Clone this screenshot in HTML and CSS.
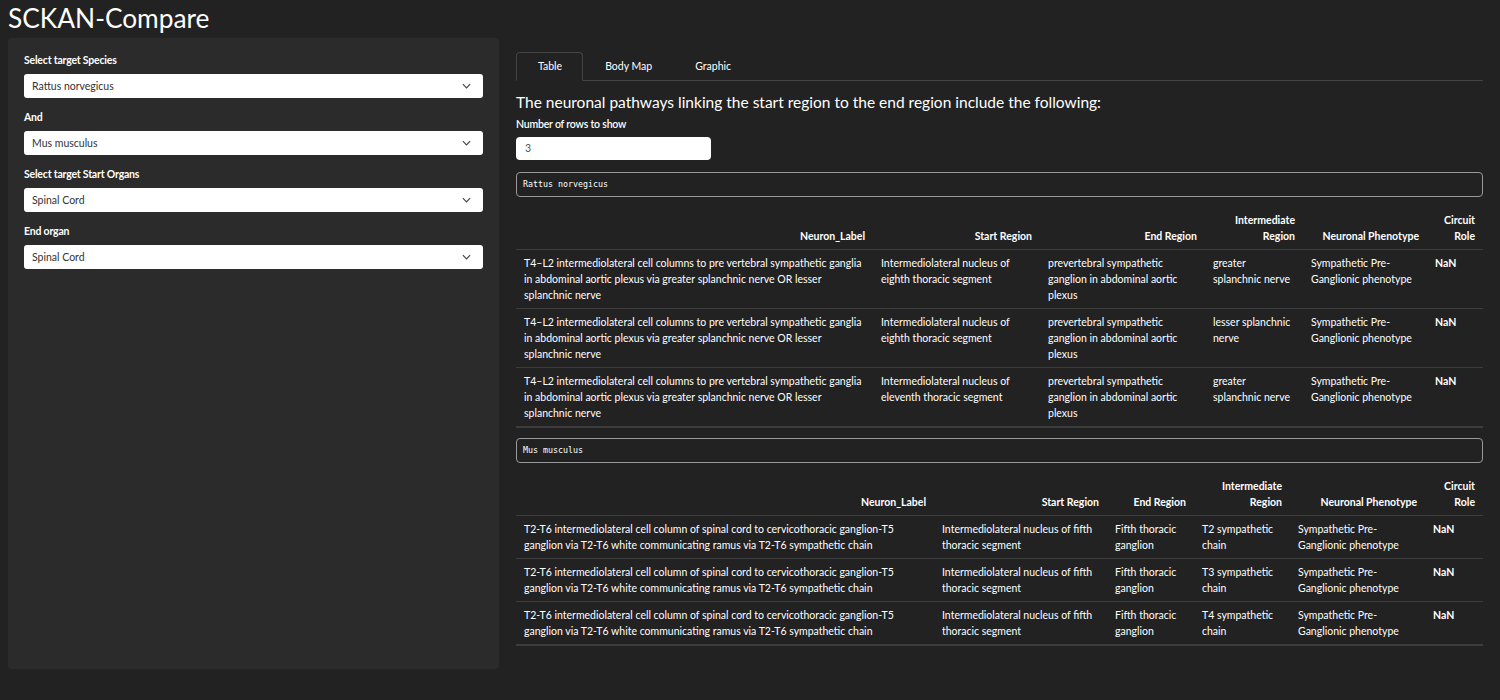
FILE: index.html
```html
<!DOCTYPE html>
<html>
<head>
<meta charset="utf-8">
<link rel="stylesheet" href="styles.css">
</head>
<body>
<div class="page">
  <h1 class="title">SCKAN-Compare</h1>
  <div class="layout">
    <aside class="sidebar">
      <div class="field">
        <label class="lbl">Select target Species</label>
        <div class="select"><span>Rattus norvegicus</span><svg class="chev" viewBox="0 0 10 6" width="9" height="6"><path d="M1 1 L5 5 L9 1" fill="none" stroke="#444" stroke-width="1.3"/></svg></div>
      </div>
      <div class="field">
        <label class="lbl">And</label>
        <div class="select"><span>Mus musculus</span><svg class="chev" viewBox="0 0 10 6" width="9" height="6"><path d="M1 1 L5 5 L9 1" fill="none" stroke="#444" stroke-width="1.3"/></svg></div>
      </div>
      <div class="field">
        <label class="lbl">Select target Start Organs</label>
        <div class="select"><span>Spinal Cord</span><svg class="chev" viewBox="0 0 10 6" width="9" height="6"><path d="M1 1 L5 5 L9 1" fill="none" stroke="#444" stroke-width="1.3"/></svg></div>
      </div>
      <div class="field">
        <label class="lbl">End organ</label>
        <div class="select"><span>Spinal Cord</span><svg class="chev" viewBox="0 0 10 6" width="9" height="6"><path d="M1 1 L5 5 L9 1" fill="none" stroke="#444" stroke-width="1.3"/></svg></div>
      </div>
    </aside>
    <main class="main">
      <ul class="tabs">
        <li class="tab active">Table</li>
        <li class="tab">Body Map</li>
        <li class="tab">Graphic</li>
      </ul>
      <h3 class="heading">The neuronal pathways linking the start region to the end region include the following:</h3>
      <label class="lbl small">Number of rows to show</label>
      <div class="numinput">3</div>

      <pre class="verb">Rattus norvegicus</pre>
      <table class="dt t1">
        <colgroup><col class="c1"><col class="c2"><col class="c3"><col class="c4"><col class="c5"><col class="c6"></colgroup>
        <thead>
          <tr><th>Neuron_Label</th><th>Start Region</th><th>End Region</th><th>Intermediate<br>Region</th><th>Neuronal Phenotype</th><th>Circuit<br>Role</th></tr>
        </thead>
        <tbody>
          <tr><td>T4–L2 intermediolateral cell columns to pre vertebral sympathetic ganglia in abdominal aortic plexus via greater splanchnic nerve OR lesser splanchnic nerve</td><td>Intermediolateral nucleus of eighth thoracic segment</td><td>prevertebral sympathetic ganglion in abdominal aortic plexus</td><td>greater splanchnic nerve</td><td>Sympathetic Pre-Ganglionic phenotype</td><td class="b">NaN</td></tr>
          <tr><td>T4–L2 intermediolateral cell columns to pre vertebral sympathetic ganglia in abdominal aortic plexus via greater splanchnic nerve OR lesser splanchnic nerve</td><td>Intermediolateral nucleus of eighth thoracic segment</td><td>prevertebral sympathetic ganglion in abdominal aortic plexus</td><td>lesser splanchnic nerve</td><td>Sympathetic Pre-Ganglionic phenotype</td><td class="b">NaN</td></tr>
          <tr><td>T4–L2 intermediolateral cell columns to pre vertebral sympathetic ganglia in abdominal aortic plexus via greater splanchnic nerve OR lesser splanchnic nerve</td><td>Intermediolateral nucleus of eleventh thoracic segment</td><td>prevertebral sympathetic ganglion in abdominal aortic plexus</td><td>greater splanchnic nerve</td><td>Sympathetic Pre-Ganglionic phenotype</td><td class="b">NaN</td></tr>
        </tbody>
      </table>

      <pre class="verb v2">Mus musculus</pre>
      <table class="dt t2">
        <colgroup><col class="c1"><col class="c2"><col class="c3"><col class="c4"><col class="c5"><col class="c6"></colgroup>
        <thead>
          <tr><th>Neuron_Label</th><th>Start Region</th><th>End Region</th><th>Intermediate<br>Region</th><th>Neuronal Phenotype</th><th>Circuit<br>Role</th></tr>
        </thead>
        <tbody>
          <tr><td>T2-T6 intermediolateral cell column of spinal cord to cervicothoracic ganglion-T5 ganglion via T2-T6 white communicating ramus via T2-T6 sympathetic chain</td><td>Intermediolateral nucleus of fifth thoracic segment</td><td>Fifth thoracic ganglion</td><td>T2 sympathetic chain</td><td>Sympathetic Pre-Ganglionic phenotype</td><td class="b">NaN</td></tr>
          <tr><td>T2-T6 intermediolateral cell column of spinal cord to cervicothoracic ganglion-T5 ganglion via T2-T6 white communicating ramus via T2-T6 sympathetic chain</td><td>Intermediolateral nucleus of fifth thoracic segment</td><td>Fifth thoracic ganglion</td><td>T3 sympathetic chain</td><td>Sympathetic Pre-Ganglionic phenotype</td><td class="b">NaN</td></tr>
          <tr><td>T2-T6 intermediolateral cell column of spinal cord to cervicothoracic ganglion-T5 ganglion via T2-T6 white communicating ramus via T2-T6 sympathetic chain</td><td>Intermediolateral nucleus of fifth thoracic segment</td><td>Fifth thoracic ganglion</td><td>T4 sympathetic chain</td><td>Sympathetic Pre-Ganglionic phenotype</td><td class="b">NaN</td></tr>
        </tbody>
      </table>
    </main>
  </div>
</div>
</body>
</html>
```

FILE: styles.css
```css
* { box-sizing: border-box; }
html, body { margin: 0; padding: 0; }
body {
  background: #222222;
  color: #ffffff;
  font-family: Lato, "Open Sans", "Liberation Sans", sans-serif;
  font-size: 10px;
  width: 1500px;
  height: 700px;
  overflow: hidden;
}
.page { padding: 0 8px; }
.title {
  margin: 0;
  padding-top: 2px;
  height: 38px;
  font-size: 26.3px;
  font-weight: 400;
  line-height: 32px;
  color: #fff;
}
.layout {
  display: flex;
  gap: 17px;
  align-items: flex-start;
}
.sidebar {
  width: 491px;
  height: 631px;
  background: #2b2b2b;
  border-radius: 4px;
  padding: 15px 16px;
  flex: none;
}
.field { margin-bottom: 12px; }
.lbl {
  display: block;
  font-size: 10.5px;
  font-weight: 700;
  line-height: 14px;
  margin-bottom: 7px;
  letter-spacing: -0.2px;
}
.select {
  height: 24px;
  background: #fff;
  border-radius: 3px;
  color: #333;
  font-size: 10.5px;
  line-height: 24px;
  padding: 0 8px;
  display: flex;
  justify-content: space-between;
  align-items: center;
}
.chev { margin-right: 4px; }
.main {
  width: 967px;
  flex: none;
  padding-top: 14px;
}
.tabs {
  list-style: none;
  margin: 0;
  padding: 0;
  display: flex;
  border-bottom: 1px solid #444;
  height: 29px;
}
.tab {
  padding: 0 20px 0 21px;
  line-height: 27px;
  font-size: 10.5px;
  border: 1px solid transparent;
  border-radius: 4px 4px 0 0;
  height: 29px;
}
.tab.active {
  border-color: #444 #444 transparent #444;
  background: #222;
}
.heading {
  margin: 10px 0 4px;
  font-size: 15.5px;
  font-weight: 400;
  line-height: 22px;
}
.lbl.small { margin-bottom: 6px; font-size: 10.5px; font-weight: 600; }
.numinput {
  width: 195px;
  height: 23px;
  background: #fff;
  border-radius: 4px;
  color: #555;
  font-size: 10.5px;
  line-height: 23px;
  padding: 0 9px;
}
.verb {
  margin: 12px 0 0;
  height: 25px;
  border: 1px solid #999;
  border-radius: 4px;
  background: #222;
  color: #fff;
  font-family: "DejaVu Sans Mono", "Liberation Mono", monospace;
  font-size: 8.3px;
  line-height: 23px;
  padding: 0 6px;
}
.verb.v2 { margin-top: 10px; }
.dt {
  width: 967px;
  table-layout: fixed;
  border-collapse: collapse;
  margin-top: 8px;
  font-size: 10.5px;
  line-height: 16px;
}
.dt th {
  text-align: right;
  font-weight: 700;
  vertical-align: bottom;
  padding: 7px 8px 5px;
  border-bottom: 1px solid #3d3d3d;
}
.dt td {
  vertical-align: top;
  padding: 5px 8px;
  border-bottom: 1px solid #3d3d3d;
}
.dt tbody tr:last-child td { border-bottom: 2px solid #3d3d3d; }
.dt td.b { font-weight: 700; }
.t1 .c1 { width: 357px; }
.t1 .c2 { width: 167px; }
.t1 .c3 { width: 165px; }
.t1 .c4 { width: 98px; }
.t1 .c5 { width: 124px; }
.t1 .c6 { width: 56px; }
.t2 .c1 { width: 418px; }
.t2 .c2 { width: 173px; }
.t2 .c3 { width: 87px; }
.t2 .c4 { width: 96px; }
.t2 .c5 { width: 135px; }
.t2 .c6 { width: 58px; }
```
